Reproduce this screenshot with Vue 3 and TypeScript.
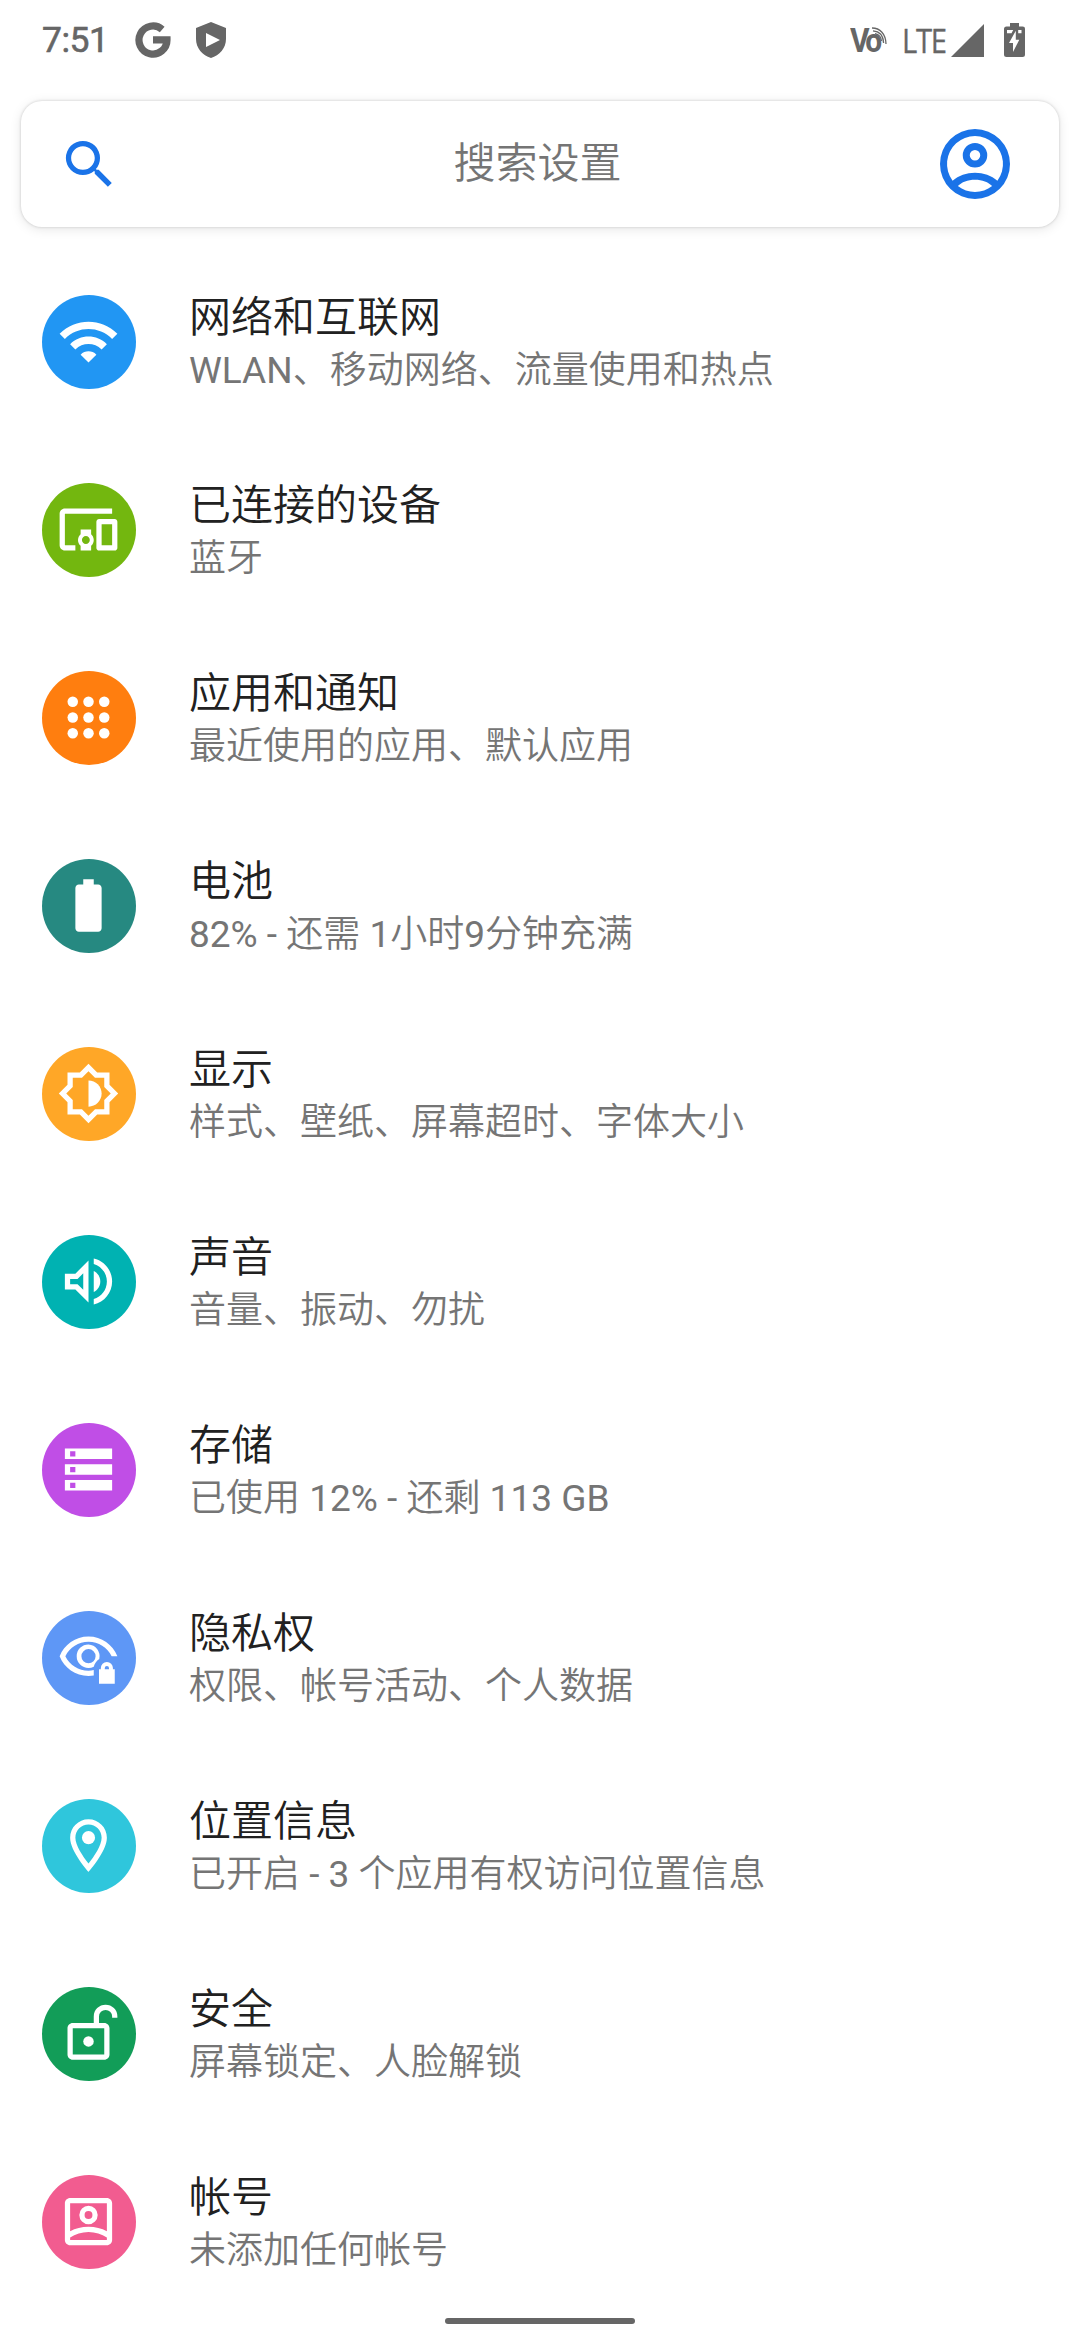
<script setup lang="ts">
interface Entry {
  title: string
  summary: string
  color: string
  paths: string[]
  evenodd?: boolean
}

const entries: Entry[] = [
  {
    title: '网络和互联网',
    summary: 'WLAN、移动网络、流量使用和热点',
    color: '#2196f3',
    paths: [
      'M1 9l2 2c4.97-4.97 13.03-4.97 18 0l2-2C16.93 2.93 7.08 2.93 1 9z',
      'M9 17l3 3 3-3c-1.65-1.66-4.34-1.66-6 0z',
      'M5 13l2 2c2.76-2.76 7.24-2.76 10 0l2-2C15.14 9.14 8.87 9.14 5 13z',
    ],
  },
  {
    title: '已连接的设备',
    summary: '蓝牙',
    color: '#73b70f',
    paths: [
      'M3 6h18V4H3c-1.1 0-2 .9-2 2v12c0 1.1.9 2 2 2h4v-2H3V6z',
      'M13 12H9v1.78c-.61.55-1 1.33-1 2.22s.39 1.67 1 2.22V20h4v-1.78c.61-.55 1-1.34 1-2.22s-.39-1.67-1-2.22V12zm-2 5.5c-.83 0-1.5-.67-1.5-1.5s.67-1.5 1.5-1.5 1.5.67 1.5 1.5-.67 1.5-1.5 1.5z',
      'M22 8h-6c-.5 0-1 .5-1 1v10c0 .5.5 1 1 1h6c.5 0 1-.5 1-1V9c0-.5-.5-1-1-1zm-1 10h-4v-8h4v8z',
    ],
  },
  {
    title: '应用和通知',
    summary: '最近使用的应用、默认应用',
    color: '#ff7e0f',
    paths: [6, 12, 18].flatMap((y) =>
      [6, 12, 18].map((x) => `M${x - 2} ${y}a2 2 0 1 0 4 0a2 2 0 1 0-4 0z`),
    ),
  },
  {
    title: '电池',
    summary: '82% - 还需 1小时9分钟充满',
    color: '#268981',
    paths: [
      'M15.67 4H14V2h-4v2H8.33C7.6 4 7 4.6 7 5.33v15.33C7 21.4 7.6 22 8.33 22h7.33c.74 0 1.34-.6 1.34-1.33V5.33C17 4.6 16.4 4 15.67 4z',
    ],
  },
  {
    title: '显示',
    summary: '样式、壁纸、屏幕超时、字体大小',
    color: '#ffa727',
    evenodd: true,
    paths: [
      'M20 8.69V4h-4.69L12 .69 8.69 4H4v4.69L.69 12 4 15.31V20h4.69L12 23.31 15.31 20H20v-4.69L23.31 12 20 8.69zm-2 5.79V18h-3.52L12 20.48 9.52 18H6v-3.52L3.52 12 6 9.52V6h3.52L12 3.52 14.48 6H18v3.52L20.48 12 18 14.48z',
      'M12 7v10c2.76 0 5-2.24 5-5s-2.24-5-5-5z',
    ],
  },
  {
    title: '声音',
    summary: '音量、振动、勿扰',
    color: '#00b2b2',
    evenodd: true,
    paths: [
      'M3 9v6h4l5 5V4L7 9H3zm7-.17v6.34L7.83 13H5v-2h2.83L10 8.83z',
      'M16.5 12c0-1.77-1.02-3.29-2.5-4.03v8.05c1.48-.73 2.5-2.25 2.5-4.02z',
      'M14 3.23v2.06c2.89.86 5 3.54 5 6.71s-2.11 5.85-5 6.71v2.06c4.01-.91 7-4.49 7-8.77s-2.99-7.86-7-8.77z',
    ],
  },
  {
    title: '存储',
    summary: '已使用 12% - 还剩 113 GB',
    color: '#c04ee6',
    evenodd: true,
    paths: [4, 10, 16].map((y) => `M3 ${y}h18v4H3zM5 ${y + 1}v2h2v-2z`),
  },
  {
    title: '隐私权',
    summary: '权限、帐号活动、个人数据',
    color: '#5e97f6',
    evenodd: true,
    paths: [
      'M12 4C7 4 2.73 7.11 1 11.5 2.73 15.89 7 19 12 19c.7 0 1.35-.05 2-.16v-2.1c-.65.16-1.3.26-2 .26-3.79 0-7.17-2.13-8.82-5.5C4.83 8.13 8.21 6 12 6c3.79 0 7.17 2.13 8.82 5.5H23C21.27 7.11 17 4 12 4z',
      'M12 7a4.5 4.5 0 0 0 0 9c.7 0 1.4-.15 2-.45.3-1.2 1-2.3 2.1-3A4.5 4.5 0 0 0 12 7zM12 8.8a2.7 2.7 0 1 1 0 5.4a2.7 2.7 0 1 1 0-5.4z',
      'M21.3 16.5V16a2.3 2.3 0 0 0-4.6 0v.5H16V22h6v-5.5zM18.2 16.5V16a.8.8 0 0 1 1.6 0v.5z',
    ],
  },
  {
    title: '位置信息',
    summary: '已开启 - 3 个应用有权访问位置信息',
    color: '#2fc6dc',
    evenodd: true,
    paths: [
      'M12 2C8.13 2 5 5.13 5 9c0 5.25 7 13 7 13s7-7.75 7-13c0-3.87-3.13-7-7-7zM7 9c0-2.76 2.24-5 5-5s5 2.24 5 5c0 2.88-2.88 7.19-5 9.88C9.92 16.21 7 11.85 7 9z',
      'M9.5 9a2.5 2.5 0 1 0 5 0a2.5 2.5 0 1 0-5 0z',
    ],
  },
  {
    title: '安全',
    summary: '屏幕锁定、人脸解锁',
    color: '#129d58',
    evenodd: true,
    paths: [
      'M18.5 1A4.5 4.5 0 0 0 14 5.5V8H6c-1.1 0-2 .9-2 2v10c0 1.1.9 2 2 2h12c1.1 0 2-.9 2-2V10c0-1.1-.9-2-2-2h-2V5.5a2.5 2.5 0 0 1 5 0V6h2v-.5A4.5 4.5 0 0 0 18.5 1zM6 10h12v10H6z',
      'M10 15a2 2 0 1 0 4 0a2 2 0 1 0-4 0z',
    ],
  },
  {
    title: '帐号',
    summary: '未添加任何帐号',
    color: '#f25c90',
    evenodd: true,
    paths: [
      'M5 3c-1.1 0-2 .9-2 2v14c0 1.1.9 2 2 2h14c1.1 0 2-.9 2-2V5c0-1.1-.9-2-2-2zM5 5h14v10.7C17 14.6 14.6 14 12 14s-5 .6-7 1.7zM5 19v-.9C7 16.8 9.4 16 12 16s5 .8 7 2.1v.9z',
      'M12 6a3.5 3.5 0 1 0 0 7a3.5 3.5 0 1 0 0-7zM12 8a1.5 1.5 0 1 1 0 3a1.5 1.5 0 1 1 0-3z',
    ],
  },
]
</script>

<template>
  <div class="screen">
    <header class="status">
      <span class="clock">7:51</span>
      <svg class="google" viewBox="0 0 36 36">
        <path d="M27.2 7.45A14 14 0 1 0 32 17.8H18" />
      </svg>
      <svg class="shield" viewBox="0 0 30 36">
        <path fill-rule="evenodd" d="M15 0L30 6V17C30 26 23.5 33.5 15 36 6.5 33.5 0 26 0 17V6zM10 11V25L24 18z" />
      </svg>
      <span class="spacer"></span>
      <span class="volte">
        <span class="vo">Vo</span>
        <svg class="waves" viewBox="0 0 16 18">
          <path d="M1 1C9 1 14.8 7 15 17M2 3.800C8.500 4.300 12.300 9 12.600 16M4 6.600C8 7.500 10.200 10.500 10.400 14" />
        </svg>
      </span>
      <span class="lte">LTE</span>
      <svg class="signal" viewBox="0 0 33 33"><path d="M33 0V33H0z" /></svg>
      <svg class="charge" viewBox="0 0 21 34">
        <path fill-rule="evenodd" d="M6 0h9v3.5h3.5A2.5 2.5 0 0 1 21 6v25.5a2.5 2.5 0 0 1-2.5 2.5h-16A2.5 2.5 0 0 1 0 31.5V6a2.5 2.5 0 0 1 2.5-2.5H6zM11.8 7.800L5 20H9V29L15.300 16.700H11.800zM3 7V10.300H7.500L9.200 7zM14.200 7V10.300H17.500V7z" />
      </svg>
    </header>

    <div class="search">
      <svg class="lens" viewBox="0 0 24 24">
        <path d="M15.5 14h-.79l-.28-.27A6.471 6.471 0 0 0 16 9.5 6.5 6.5 0 1 0 9.5 16c1.61 0 3.09-.59 4.23-1.57l.27.28v.79l5 4.99L20.49 19l-4.99-5zm-6 0C7.01 14 5 11.99 5 9.5S7.01 5 9.5 5 14 7.01 14 9.5 11.99 14 9.5 14z" />
      </svg>
      <span class="hint">搜索设置</span>
      <svg class="avatar" viewBox="0 0 24 24">
        <path fill-rule="evenodd" d="M12 2a10 10 0 1 0 0 20a10 10 0 1 0 0-20zM7.1 18.3C8.2 17.2 9.9 16.5 12 16.5s3.8.7 4.9 1.8C15.5 19.4 13.8 20 12 20s-3.5-.6-4.9-1.7zM18.4 16.8C16.7 15.3 14.4 14.5 12 14.5s-4.7.8-6.4 2.3A8 8 0 1 1 18.4 16.8z" />
        <path fill-rule="evenodd" d="M12 6a3.5 3.5 0 1 0 0 7a3.5 3.5 0 1 0 0-7zM12 8a1.5 1.5 0 1 1 0 3a1.5 1.5 0 1 1 0-3z" />
      </svg>
    </div>

    <main class="list">
      <div v-for="entry in entries" :key="entry.title" class="row">
        <span class="badge" :style="{ backgroundColor: entry.color }">
          <svg viewBox="0 0 24 24">
            <path v-for="d in entry.paths" :key="d" :d="d" :fill-rule="entry.evenodd ? 'evenodd' : 'nonzero'" />
          </svg>
        </span>
        <div class="text">
          <div class="title">{{ entry.title }}</div>
          <div class="summary">{{ entry.summary }}</div>
        </div>
      </div>
    </main>

    <div class="nav-handle"></div>
  </div>
</template>

<style>
body {
  margin: 0;
  background: #fff;
}
</style>

<style scoped>
.screen {
  position: relative;
  box-sizing: border-box;
  width: 1080px;
  height: 2340px;
  overflow: hidden;
  background: #fff;
  font-family: Roboto, "Noto Sans CJK SC DemiLight", "Noto Sans CJK SC", sans-serif;
}

svg {
  display: block;
  flex: none;
}

.status {
  display: flex;
  box-sizing: border-box;
  height: 80px;
  padding: 0 55px 0 42px;
  align-items: center;
  color: #666;
  fill: #666;
}

.clock {
  width: 93px;
  font-size: 35.5px;
  font-weight: 400;
  letter-spacing: -0.5px;
  -webkit-text-stroke: 0.6px #666;
}

.google {
  width: 36px;
  height: 36px;
}

.google path {
  fill: none;
  stroke: #666;
  stroke-width: 7.2;
}

.shield {
  width: 30px;
  height: 36px;
  margin-left: 25px;
}

.spacer {
  flex: 1;
}

.volte {
  position: relative;
  width: 37px;
  margin-right: 15px;
  font-size: 34px;
  font-weight: 700;
}

.vo {
  display: inline-block;
  letter-spacing: -4px;
  transform: scaleX(0.88);
  transform-origin: left;
}

.waves {
  position: absolute;
  top: 7px;
  right: 0;
  width: 16px;
  height: 18px;
  fill: none;
  stroke: #666;
  stroke-width: 1.3;
}

.lte {
  width: 49px;
  font-family: "Open Sans", sans-serif;
  font-size: 32.5px;
  letter-spacing: -1.5px;
  transform: scaleX(0.9);
  transform-origin: left;
  -webkit-text-stroke: 0.3px #666;
}

.signal {
  width: 33px;
  height: 33px;
}

.charge {
  width: 21px;
  height: 34px;
  margin-left: 20px;
}

.search {
  display: flex;
  box-sizing: border-box;
  height: 126px;
  margin: 21px 21px 0;
  padding: 0 42px 0 37px;
  align-items: center;
  border-radius: 21px;
  background: #fff;
  box-shadow: 0 0 3px rgba(0, 0, 0, 0.18), 0 2px 12px rgba(0, 0, 0, 0.1);
  fill: #1a73e8;
}

.lens {
  width: 63px;
  height: 63px;
}

.hint {
  flex: 1;
  padding-left: 21px;
  color: #757575;
  font-size: 42px;
  line-height: 56px;
  text-align: center;
}

.avatar {
  width: 84px;
  height: 84px;
}

.list {
  padding-top: 21px;
}

.row {
  display: flex;
  height: 188px;
  padding-left: 42px;
  align-items: center;
}

.badge {
  box-sizing: border-box;
  width: 94px;
  height: 94px;
  padding: 15px;
  border-radius: 50%;
  fill: #fff;
}

.badge svg {
  width: 63px;
  height: 63px;
}

.text {
  margin-left: 53px;
  white-space: nowrap;
}

.title {
  color: #212121;
  font-size: 42px;
  line-height: 56px;
}

.summary {
  color: #757575;
  font-size: 37px;
  line-height: 49px;
}

.nav-handle {
  position: absolute;
  bottom: 16px;
  left: 445px;
  width: 190px;
  height: 6px;
  border-radius: 3px;
  background: #666;
}
</style>
